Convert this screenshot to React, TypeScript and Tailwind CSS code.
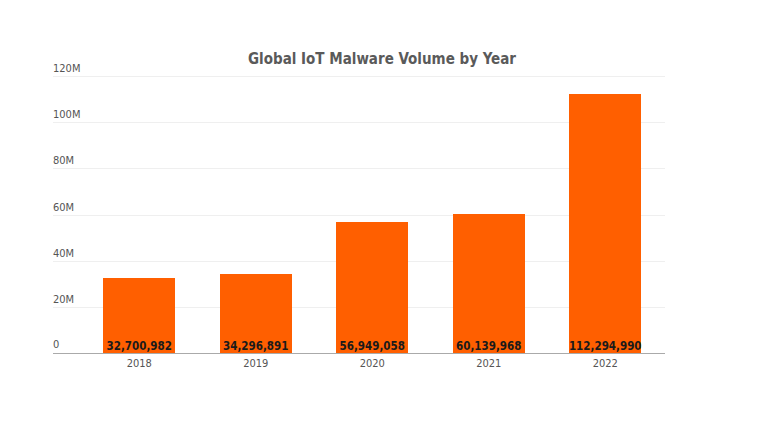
const data = [
  { year: "2018", v: 32700982 },
  { year: "2019", v: 34296891 },
  { year: "2020", v: 56949058 },
  { year: "2021", v: 60139968 },
  { year: "2022", v: 112294990 },
];
const ticks = ["120M", "100M", "80M", "60M", "40M", "20M", "0"];
const H = 277;

export default function App() {
  return (
    <div className="w-[760px] h-[422px] bg-white relative" style={{ fontFamily: '"DejaVu Sans Condensed","DejaVu Sans",sans-serif' }}>
      <div className="pt-[48px] h-[76px] text-center text-[15px] font-bold text-[#5a5a5a] pl-[4px]">Global IoT Malware Volume by Year</div>
      <div className="relative ml-[53px] w-[612px] h-[277px]">
        {ticks.map((t, i) => (
          <div key={t} className="absolute left-0 right-0" style={{ top: (i * H) / 6 }}>
            {i < 6 && <div className="h-px bg-[#efefef]" />}
            <div className="absolute left-0 bottom-[3px] text-[11px] text-[#555] leading-none">{t}</div>
          </div>
        ))}
        <div className="absolute inset-0 pl-[28px] flex items-end">
          {data.map((d) => (
            <div key={d.year} className="w-[116.5px] flex justify-center">
              <div className="w-[72px] bg-[#ff5f00] flex items-end justify-center pb-[1px]" style={{ height: (d.v / 120000000) * H }}>
                <span className="text-[11.5px] font-bold text-[#1a1a1a] leading-none">{d.v.toLocaleString("en-US")}</span>
              </div>
            </div>
          ))}
        </div>
      </div>
      <div className="ml-[53px] w-[612px] h-px bg-[#aaa]" />
      <div className="ml-[53px] pl-[28px] flex pt-[2px]">
        {data.map((d) => (
          <div key={d.year} className="w-[116.5px] text-center text-[11px] text-[#555]">{d.year}</div>
        ))}
      </div>
    </div>
  );
}
